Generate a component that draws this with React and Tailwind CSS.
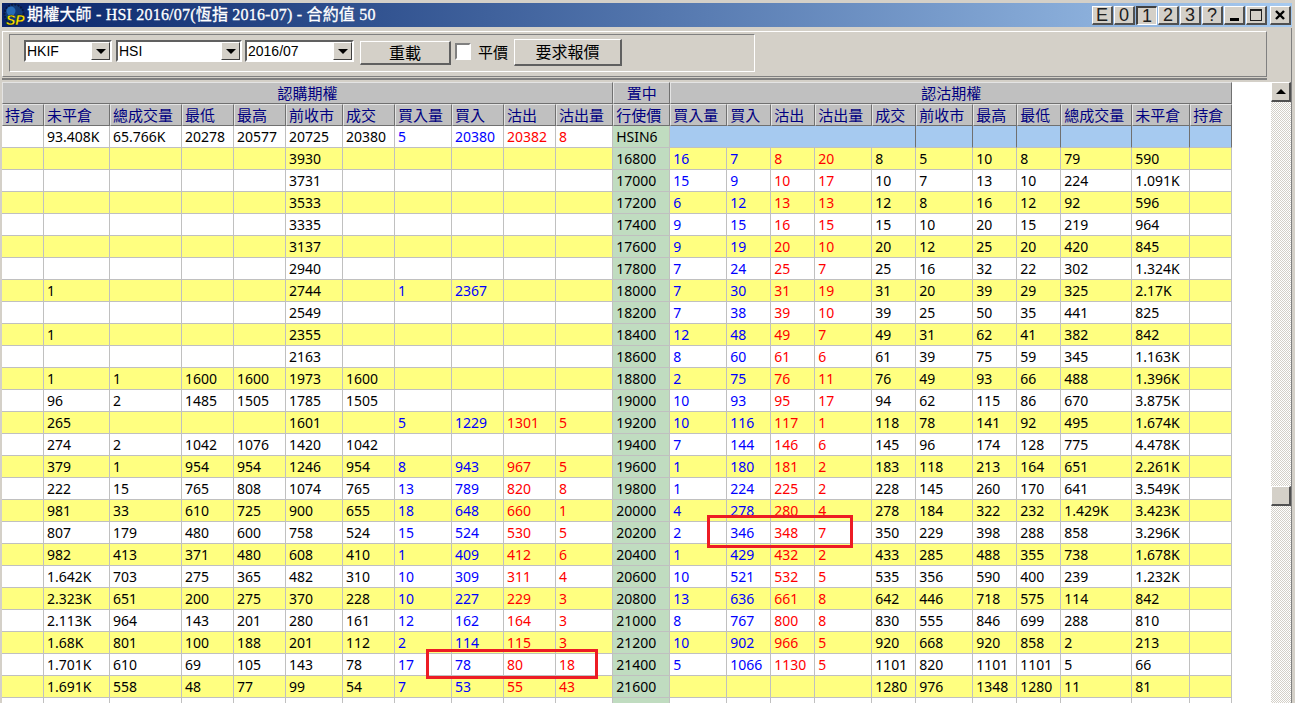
const widths = [42, 66, 72, 52, 52, 57, 52, 57, 52, 52, 57, 57, 57, 44, 44, 57, 44, 57, 44, 44, 71, 58, 42];

const rows = [
  [16800, '', '', '', '', 3930, '', '', '', '', '', 16, 7, 8, 20, 8, 5, 10, 8, 79, 590],
  [17000, '', '', '', '', 3731, '', '', '', '', '', 15, 9, 10, 17, 10, 7, 13, 10, 224, '1.091K'],
  [17200, '', '', '', '', 3533, '', '', '', '', '', 6, 12, 13, 13, 12, 8, 16, 12, 92, 596],
  [17400, '', '', '', '', 3335, '', '', '', '', '', 9, 15, 16, 15, 15, 10, 20, 15, 219, 964],
  [17600, '', '', '', '', 3137, '', '', '', '', '', 9, 19, 20, 10, 20, 12, 25, 20, 420, 845],
  [17800, '', '', '', '', 2940, '', '', '', '', '', 7, 24, 25, 7, 25, 16, 32, 22, 302, '1.324K'],
  [18000, 1, '', '', '', 2744, '', 1, 2367, '', '', 7, 30, 31, 19, 31, 20, 39, 29, 325, '2.17K'],
  [18200, '', '', '', '', 2549, '', '', '', '', '', 7, 38, 39, 10, 39, 25, 50, 35, 441, 825],
  [18400, 1, '', '', '', 2355, '', '', '', '', '', 12, 48, 49, 7, 49, 31, 62, 41, 382, 842],
  [18600, '', '', '', '', 2163, '', '', '', '', '', 8, 60, 61, 6, 61, 39, 75, 59, 345, '1.163K'],
  [18800, 1, 1, 1600, 1600, 1973, 1600, '', '', '', '', 2, 75, 76, 11, 76, 49, 93, 66, 488, '1.396K'],
  [19000, 96, 2, 1485, 1505, 1785, 1505, '', '', '', '', 10, 93, 95, 17, 94, 62, 115, 86, 670, '3.875K'],
  [19200, 265, '', '', '', 1601, '', 5, 1229, 1301, 5, 10, 116, 117, 1, 118, 78, 141, 92, 495, '1.674K'],
  [19400, 274, 2, 1042, 1076, 1420, 1042, '', '', '', '', 7, 144, 146, 6, 145, 96, 174, 128, 775, '4.478K'],
  [19600, 379, 1, 954, 954, 1246, 954, 8, 943, 967, 5, 1, 180, 181, 2, 183, 118, 213, 164, 651, '2.261K'],
  [19800, 222, 15, 765, 808, 1074, 765, 13, 789, 820, 8, 1, 224, 225, 2, 228, 145, 260, 170, 641, '3.549K'],
  [20000, 981, 33, 610, 725, 900, 655, 18, 648, 660, 1, 4, 278, 280, 4, 278, 184, 322, 232, '1.429K', '3.423K'],
  [20200, 807, 179, 480, 600, 758, 524, 15, 524, 530, 5, 2, 346, 348, 7, 350, 229, 398, 288, 858, '3.296K'],
  [20400, 982, 413, 371, 480, 608, 410, 1, 409, 412, 6, 1, 429, 432, 2, 433, 285, 488, 355, 738, '1.678K'],
  [20600, '1.642K', 703, 275, 365, 482, 310, 10, 309, 311, 4, 10, 521, 532, 5, 535, 356, 590, 400, 239, '1.232K'],
  [20800, '2.323K', 651, 200, 275, 370, 228, 10, 227, 229, 3, 13, 636, 661, 8, 642, 446, 718, 575, 114, 842],
  [21000, '2.113K', 964, 143, 201, 280, 161, 12, 162, 164, 3, 8, 767, 800, 8, 830, 555, 846, 699, 288, 810],
  [21200, '1.68K', 801, 100, 188, 201, 112, 2, 114, 115, 3, 10, 902, 966, 5, 920, 668, 920, 858, 2, 213],
  [21400, '1.701K', 610, 69, 105, 143, 78, 17, 78, 80, 18, 5, 1066, 1130, 5, 1101, 820, 1101, 1101, 5, 66],
  [21600, '1.691K', 558, 48, 77, 99, 54, 7, 53, 55, 43, '', '', '', '', 1280, 976, 1348, 1280, 11, 81],
  ['', '', '', '', '', '', '', '', '', '', '', '', '', '', '', '', '', '', '', '', ''],
];

const callHeads = ['持倉', '未平倉', '總成交量', '最低', '最高', '前收市', '成交', '買入量', '買入', '沽出', '沽出量'];
const putHeads = ['買入量', '買入', '沽出', '沽出量', '成交', '前收市', '最高', '最低', '總成交量', '未平倉', '持倉'];

const headBase = 'bg-[#c0c0c0] text-[#000080] text-[15px] font-normal border border-t-[#e4e4e4] border-l-[#e4e4e4] border-r-[#707070] border-b-[#707070] whitespace-nowrap overflow-hidden';
const headCell = headBase + ' pl-[2px] text-left';
const dataCell = 'border-r border-b border-[#c0c0c0] pl-[3px] text-left whitespace-nowrap overflow-hidden';
const blueCell = 'bg-[#a6caf0] border-r border-b border-r-[#707070] border-b-[#c0c0c0]';

// color of the body cells: bid side is blue, ask side is red
function callColor(i) {
  if (i === 7 || i === 8) return 'text-[#0000ff]';
  if (i === 9 || i === 10) return 'text-[#ff0000]';
  return 'text-black';
}

function putColor(i) {
  if (i === 0 || i === 1) return 'text-[#0000ff]';
  if (i === 2 || i === 3) return 'text-[#ff0000]';
  return 'text-black';
}

function WinButton({ children, pressed, className }) {
  return (
    <div
      className={
        "w-[21px] h-[19px] flex items-center justify-center bg-[#d4d0c8] text-[#202020] text-[18px] leading-none font-['Liberation_Sans',sans-serif] " +
        (pressed
          ? 'border-t-2 border-l-2 border-r border-b border-t-[#404040] border-l-[#404040] border-r-white border-b-white '
          : 'border-t border-l border-r-2 border-b-2 border-t-white border-l-white border-r-[#505050] border-b-[#505050] ') +
        (className || '')
      }
    >
      {children}
    </div>
  );
}

function Combo({ value, width }) {
  return (
    <div className={`${width} h-[22px] flex border-2 border-t-[#606060] border-l-[#606060] border-r-white border-b-white bg-white`}>
      <div className="flex-1 pl-[1px] text-[14px] leading-[18px] text-black overflow-hidden font-['Liberation_Sans',sans-serif]">{value}</div>
      <div className="w-[19px] h-[18px] flex items-center justify-center bg-[#d4d0c8] border border-t-white border-l-white border-r-[#404040] border-b-[#404040]">
        <div className="w-0 h-0 border-l-[5px] border-r-[5px] border-t-[5px] border-l-transparent border-r-transparent border-t-black" />
      </div>
    </div>
  );
}

function PushButton({ children, width, height }) {
  return (
    <div className={`${width} ${height} flex items-center justify-center bg-[#d4d0c8] border-t border-l border-r-2 border-b-2 border-t-white border-l-white border-r-[#606060] border-b-[#606060] text-[16px] text-black`}>
      {children}
    </div>
  );
}

function Logo() {
  return (
    <svg width="24" height="24" viewBox="0 0 24 24" className="shrink-0">
      <circle cx="12" cy="11" r="9.5" fill="#123a78" stroke="#0a1a40" strokeWidth="2" strokeDasharray="2 1.2" />
      <circle cx="9" cy="8" r="4.5" fill="#2f7fd0" opacity="0.7" />
      <text x="4" y="22" fontFamily="'Liberation Sans', sans-serif" fontWeight="700" fontStyle="italic" fontSize="14" fill="#ffe600" stroke="#000" strokeWidth="0.3">SP</text>
    </svg>
  );
}

export default function App() {
  return (
    <div className="relative w-[1295px] h-[703px] overflow-hidden bg-[#d4d0c8] font-['Noto_Sans','Noto_Sans_CJK_TC',sans-serif]">
      {/* Title bar */}
      <div className="h-[24px] mt-[3px] ml-[2px] mr-[3px] flex items-center bg-gradient-to-r from-[#0a246a] to-[#a6caf0]">
        <Logo />
        <span className="ml-[1px] text-white text-[16px] tracking-[0.2px] leading-[24px] whitespace-nowrap [-webkit-text-stroke:0.3px_white] font-['Liberation_Serif','Noto_Sans_CJK_TC',serif]">期權大師 - HSI 2016/07(恆指 2016-07) - 合約值 50</span>
        <div className="ml-auto flex items-center gap-[1px] pr-[1px]">
          <WinButton>E</WinButton>
          <WinButton>0</WinButton>
          <WinButton pressed>1</WinButton>
          <WinButton>2</WinButton>
          <WinButton>3</WinButton>
          <WinButton>?</WinButton>
          <WinButton className="items-end pb-[2px]">
            <div className="w-[9px] h-[3px] bg-black" />
          </WinButton>
          <WinButton>
            <div className="w-[12px] h-[12px] border border-t-2 border-[#202020]" />
          </WinButton>
          <WinButton className="ml-[2px]">
            <svg width="12" height="12" viewBox="0 0 12 12">
              <path d="M2 2l8 8M10 2l-8 8" stroke="#000" strokeWidth="2.4" fill="none" />
            </svg>
          </WinButton>
        </div>
      </div>

      <div className="ml-[2px] mr-[3px] border-r border-[#808080]">
        {/* Toolbar */}
        <div className="h-[52px] mr-[24px] mt-[1px] pt-[3px] border-b-2 border-[#808080]">
          <div className="h-[46px] flex border border-t-white border-l-white border-r-[#808080] border-b-[#808080]">
            <div className="w-[746px] h-[38px] mt-[2px] ml-[6px] pl-[14px] flex items-start border border-t-[#808080] border-l-[#808080] border-r-white border-b-white">
              <div className="mt-[5px]"><Combo value="HKIF" width="w-[88px]" /></div>
              <div className="mt-[5px] ml-[4px]"><Combo value="HSI" width="w-[126px]" /></div>
              <div className="mt-[5px] ml-[3px]"><Combo value="2016/07" width="w-[109px]" /></div>
              <div className="mt-[6px] ml-[6px]"><PushButton width="w-[91px]" height="h-[24px]">重載</PushButton></div>
              <div className="mt-[8px] ml-[4px] w-[16px] h-[17px] bg-white border-2 border-t-[#808080] border-l-[#808080] border-r-white border-b-white" />
              <span className="mt-[5px] ml-[7px] text-[15px] leading-[24px] text-black">平價</span>
              <div className="mt-[4px] ml-[6px]"><PushButton width="w-[108px]" height="h-[27px]">要求報價</PushButton></div>
            </div>
          </div>
        </div>

        {/* Body: grid and scrollbar */}
        <div className="h-[624px] mt-[2px] bg-white flex">
          <div className="w-[1269px] overflow-hidden">
            <table className="table-fixed border-separate border-spacing-0 w-[1230px] text-[14px] leading-[20px]">
              <colgroup>
                {widths.map((w, i) => (
                  <col key={i} style={{ width: w }} />
                ))}
              </colgroup>
              <thead>
                <tr className="h-[22px]">
                  <th colSpan={11} className={headBase + ' text-center'}>認購期權</th>
                  <th className={headBase + ' text-center'}>置中</th>
                  <th colSpan={11} className={headBase + ' text-center'}>認沽期權</th>
                </tr>
                <tr className="h-[22px]">
                  {callHeads.map((h, i) => <th key={i} className={headCell}>{h}</th>)}
                  <th className={headCell}>行使價</th>
                  {putHeads.map((h, i) => <th key={i} className={headCell}>{h}</th>)}
                </tr>
              </thead>
              <tbody>
                <tr className="h-[22px] bg-white">
                  <td className={dataCell}></td>
                  <td className={dataCell}>93.408K</td>
                  <td className={dataCell}>65.766K</td>
                  <td className={dataCell}>20278</td>
                  <td className={dataCell}>20577</td>
                  <td className={dataCell}>20725</td>
                  <td className={dataCell}>20380</td>
                  <td className={dataCell + ' text-[#0000ff]'}>5</td>
                  <td className={dataCell + ' text-[#0000ff]'}>20380</td>
                  <td className={dataCell + ' text-[#ff0000]'}>20382</td>
                  <td className={dataCell + ' text-[#ff0000]'}>8</td>
                  <td className={dataCell + ' bg-[#c0dcc0]'}>HSIN6</td>
                  <td colSpan={5} className={blueCell}></td>
                  {[0, 1, 2, 3, 4, 5].map(i => <td key={i} className={blueCell}></td>)}
                </tr>
                {rows.map((r, ri) => {
                  const [strike, oi, vol, low, high, prev, last, bq, bid, ask, aq, ...put] = r;
                  const bg = ri % 2 === 0 ? 'bg-[#ffff80]' : 'bg-white';
                  const calls = ['', oi, vol, low, high, prev, last, bq, bid, ask, aq];
                  return (
                    <tr key={ri} className={'h-[22px] ' + bg}>
                      {calls.map((v, i) => <td key={i} className={dataCell + ' ' + callColor(i)}>{v}</td>)}
                      <td className={dataCell + ' bg-[#c0dcc0] text-black'}>{strike}</td>
                      {put.map((v, i) => <td key={i} className={dataCell + ' ' + putColor(i)}>{v}</td>)}
                      <td className={dataCell}></td>
                    </tr>
                  );
                })}
              </tbody>
            </table>
          </div>

          {/* Vertical scrollbar */}
          <div className="relative w-[20px] bg-[repeating-conic-gradient(#d4d0c8_0%_25%,#ffffff_0%_50%)] bg-[length:2px_2px]">
            <div className="h-[20px] flex items-center justify-center bg-[#d4d0c8] border-t border-l border-r-2 border-b-2 border-t-white border-l-white border-r-[#505050] border-b-[#505050]">
              <div className="w-0 h-0 border-l-[5px] border-r-[5px] border-b-[5px] border-l-transparent border-r-transparent border-b-black" />
            </div>
            <div className="absolute left-0 top-[404px] w-[20px] h-[20px] bg-[#d4d0c8] border-t border-l border-r-2 border-b-2 border-t-white border-l-white border-r-[#505050] border-b-[#505050]" />
          </div>
        </div>
      </div>

      {/* Red annotation boxes */}
      <div className="absolute left-[707px] top-[515px] w-[146px] h-[33px] border-[3px] border-[#ed1c24]" />
      <div className="absolute left-[426px] top-[649px] w-[172px] h-[30px] border-[3px] border-[#ed1c24]" />
    </div>
  );
}
